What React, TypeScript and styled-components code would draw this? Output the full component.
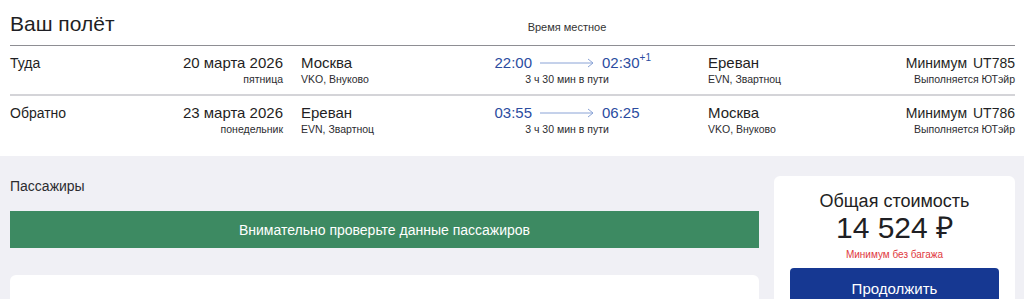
import styled, { createGlobalStyle } from "styled-components";

interface Leg {
    label: string;
    date: string;
    weekday: string;
    fromCity: string;
    fromAirport: string;
    depart: string;
    arrive: string;
    nextDay: boolean;
    duration: string;
    toCity: string;
    toAirport: string;
    fare: string;
    flight: string;
    carrier: string;
}

const legs: Leg[] = [
    {
        label: "Туда",
        date: "20 марта 2026",
        weekday: "пятница",
        fromCity: "Москва",
        fromAirport: "VKO, Внуково",
        depart: "22:00",
        arrive: "02:30",
        nextDay: true,
        duration: "3 ч 30 мин в пути",
        toCity: "Ереван",
        toAirport: "EVN, Звартноц",
        fare: "Минимум",
        flight: "UT785",
        carrier: "Выполняется ЮТэйр",
    },
    {
        label: "Обратно",
        date: "23 марта 2026",
        weekday: "понедельник",
        fromCity: "Ереван",
        fromAirport: "EVN, Звартноц",
        depart: "03:55",
        arrive: "06:25",
        nextDay: false,
        duration: "3 ч 30 мин в пути",
        toCity: "Москва",
        toAirport: "VKO, Внуково",
        fare: "Минимум",
        flight: "UT786",
        carrier: "Выполняется ЮТэйр",
    },
];

const GlobalStyle = createGlobalStyle`
  body {
    margin: 0;
    background: #f0f0f5;
    font-family: "Liberation Sans", Arial, sans-serif;
    color: #1f1f24;
  }
`;

const Page = styled.div`
  min-height: 100vh;
  background: #f0f0f5;
`;

const FlightSection = styled.section`
  background: #fff;
  padding: 0 9px 11px 10px;
`;

const grid = `
  display: grid;
  grid-template-columns: 180px 93px 166px 236px 1fr auto;
`;

const HeaderRow = styled.div`
  ${grid}
  height: 45px;
  align-items: center;
  border-bottom: 1px solid #8e8e93;
`;

const Title = styled.h1`
  grid-column: 1 / 4;
  margin: 0;
  font-size: 21px;
  font-weight: 400;
  line-height: 26px;
  padding-top: 2px;
`;

const LocalTime = styled.div`
  grid-column: 4;
  text-align: center;
  font-size: 11px;
  padding-top: 8px;
  color: #333;
`;

const LegRow = styled.div<{ $last?: boolean }>`
  ${grid}
  padding: 8px 0 ${(p) => (p.$last ? 9 : 8)}px;
  border-bottom: ${(p) => (p.$last ? "none" : "2px solid #d4d4d8")};
`;

const Cell = styled.div<{ $align?: "left" | "right" | "center"; $indent?: number }>`
  display: flex;
  flex-direction: column;
  align-items: ${(p) =>
        p.$align === "right" ? "flex-end" : p.$align === "center" ? "center" : "flex-start"};
  padding-left: ${(p) => p.$indent ?? 0}px;
  white-space: nowrap;
`;

const Main = styled.span<{ $size?: number }>`
  font-size: ${(p) => p.$size ?? 15}px;
  line-height: 18px;
`;

const Sub = styled.span`
  font-size: 10.5px;
  line-height: 14px;
  color: #2c2c30;
`;

const Times = styled.div`
  display: flex;
  align-items: center;
  gap: 8px;
  font-size: 15px;
  line-height: 18px;
  color: #2b4c9f;
`;

const Time = styled.span`
  position: relative;
`;

const NextDay = styled.sup`
  position: absolute;
  left: 100%;
  top: -1px;
  font-size: 10px;
  line-height: 10px;
`;

const FareLine = styled.span`
  font-size: 14px;
  line-height: 18px;
  word-spacing: 2px;
`;

const Bottom = styled.div`
  display: flex;
  gap: 15px;
  padding: 20px 9px 0 10px;
`;

const Passengers = styled.div`
  flex: 1;
  display: flex;
  flex-direction: column;
`;

const SectionTitle = styled.h2`
  margin: 0;
  font-size: 14px;
  font-weight: 400;
  line-height: 20px;
  color: #2c2c30;
`;

const Notice = styled.div`
  margin-top: 15px;
  height: 37px;
  background: #3d8a62;
  color: #fff;
  font-size: 14px;
  display: flex;
  align-items: center;
  justify-content: center;
`;

const PassengerCard = styled.div`
  margin-top: 27px;
  height: 60px;
  background: #fff;
  border-radius: 6px;
`;

const TotalCard = styled.aside`
  width: 241px;
  box-sizing: border-box;
  background: #fff;
  border-radius: 6px;
  padding: 14px 16px 16px;
  display: flex;
  flex-direction: column;
  align-items: center;
`;

const TotalLabel = styled.div`
  font-size: 18px;
  line-height: 22px;
`;

const Price = styled.div`
  font-size: 30px;
  line-height: 32px;
`;

const PriceNote = styled.div`
  margin-top: 5px;
  font-size: 10px;
  line-height: 12px;
  color: #e0393e;
`;

const ContinueButton = styled.button`
  margin-top: 7px;
  width: 100%;
  height: 40px;
  border: none;
  border-radius: 4px;
  background: #163892;
  color: #fff;
  font-family: inherit;
  font-size: 15px;
  cursor: pointer;
`;

const Arrow = () => (
    <svg width="54" height="10" viewBox="0 0 54 10">
        <path d="M0 5H53M48 1L53 5L48 9" fill="none" stroke="#8aa3d6" strokeWidth="1" />
    </svg>
);

const App: React.FC = () => {
    return (
        <Page>
            <GlobalStyle />
            <FlightSection>
                <HeaderRow>
                    <Title>Ваш полёт</Title>
                    <LocalTime>Время местное</LocalTime>
                </HeaderRow>
                {legs.map((leg, i) => (
                    <LegRow key={leg.flight} $last={i === legs.length - 1}>
                        <Cell>
                            <Main $size={14}>{leg.label}</Main>
                        </Cell>
                        <Cell $align="right">
                            <Main>{leg.date}</Main>
                            <Sub>{leg.weekday}</Sub>
                        </Cell>
                        <Cell $indent={18}>
                            <Main>{leg.fromCity}</Main>
                            <Sub>{leg.fromAirport}</Sub>
                        </Cell>
                        <Cell $align="center">
                            <Times>
                                <Time>{leg.depart}</Time>
                                <Arrow />
                                <Time>
                                    {leg.arrive}
                                    {leg.nextDay && <NextDay>+1</NextDay>}
                                </Time>
                            </Times>
                            <Sub>{leg.duration}</Sub>
                        </Cell>
                        <Cell $indent={23}>
                            <Main>{leg.toCity}</Main>
                            <Sub>{leg.toAirport}</Sub>
                        </Cell>
                        <Cell $align="right">
                            <FareLine>{leg.fare} {leg.flight}</FareLine>
                            <Sub>{leg.carrier}</Sub>
                        </Cell>
                    </LegRow>
                ))}
            </FlightSection>
            <Bottom>
                <Passengers>
                    <SectionTitle>Пассажиры</SectionTitle>
                    <Notice>Внимательно проверьте данные пассажиров</Notice>
                    <PassengerCard />
                </Passengers>
                <TotalCard>
                    <TotalLabel>Общая стоимость</TotalLabel>
                    <Price>14 524 ₽</Price>
                    <PriceNote>Минимум без багажа</PriceNote>
                    <ContinueButton>Продолжить</ContinueButton>
                </TotalCard>
            </Bottom>
        </Page>
    );
};

export default App;
